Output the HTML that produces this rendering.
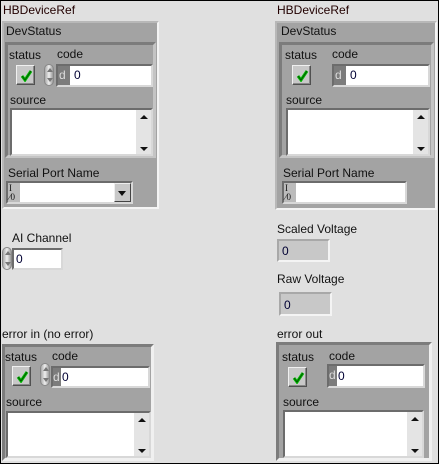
<!DOCTYPE html>
<html><head><style>
*{margin:0;padding:0;box-sizing:border-box}
body{width:439px;height:464px;background:#e0e0e0;position:relative;overflow:hidden;font-family:"Liberation Sans",sans-serif;font-size:12px;color:#111}
.frame{position:absolute;left:0;top:0;width:439px;height:464px;border:1px solid #000;pointer-events:none;z-index:10}
.a{position:absolute}
.t{position:absolute;white-space:nowrap;line-height:14px}
.cl{position:absolute;background:#a3a3a3;border:2px solid;border-color:#b8b8b8 #f4f4f4 #f4f4f4 #b8b8b8}
.in{position:absolute;background:#a3a3a3;border:3px solid;border-color:#7c7c7c #c4c4c4 #c4c4c4 #7c7c7c}
.led{position:absolute;width:19px;height:20px;background:#c8c8c8;border:1px solid;border-color:#f0f0f0 #505050 #505050 #f0f0f0;box-shadow:inset -1px -1px 0 #888}
.led svg{position:absolute;left:3px;top:3px}
.fld{position:absolute;background:#fff;border:2px solid;border-color:#6c6c6c #d8d8d8 #d8d8d8 #6c6c6c}
.dk{position:absolute;background:#7c7c7c;color:#ddd;font-size:12px;line-height:18px;padding-left:1px}
.spin{position:absolute;width:10px;background:linear-gradient(90deg,#aaa,#eee,#999);border-radius:5px;border:1px solid #888}
.spin:before{content:"";position:absolute;left:2px;top:3px;border:3px solid transparent;border-bottom:4px solid #777;border-top:0}
.spin:after{content:"";position:absolute;left:2px;bottom:3px;border:3px solid transparent;border-top:4px solid #777;border-bottom:0}
.sb{position:absolute;top:0;right:0;width:15px;bottom:0;background:#e4e4e4}
.sb:before{content:"";position:absolute;left:4px;top:5px;border:4px solid transparent;border-bottom:4px solid #111;border-top:0}
.sb:after{content:"";position:absolute;left:4px;bottom:3px;border:4px solid transparent;border-top:4px solid #111;border-bottom:0}
.num{color:#003;font-size:12px;line-height:18px}
.io{position:absolute;left:1px;top:1px;font-size:9px;line-height:9px;font-family:"Liberation Serif",serif}
.ind{position:absolute;background:#c8c8c8;border:2px solid;border-color:#a8a8a8 #f4f4f4 #f4f4f4 #a8a8a8}
</style></head><body>
<div class="frame"></div>
<svg width="0" height="0" style="position:absolute"><defs></defs></svg>

<!-- LEFT TOP -->
<div class="t" style="left:3px;top:3px;color:#200">HBDeviceRef</div>
<div class="cl" style="left:2px;top:21px;width:157px;height:188px"></div>
<div class="t" style="left:6px;top:24px">DevStatus</div>
<div class="in" style="left:5px;top:42px;width:151px;height:116px"></div>
<div class="t" style="left:9px;top:48px">status</div>
<div class="t" style="left:57px;top:47px">code</div>
<div class="led" style="left:16px;top:65px"><svg width="13" height="13"><path d="M2 7 L5 11 L11 2" stroke="#0b0" stroke-width="3" fill="none"/><path d="M2 7 L5 11 L11 2" stroke="#050" stroke-width="1" fill="none"/></svg></div>
<div class="spin" style="left:44px;top:64px;height:22px"></div>
<div class="fld" style="left:56px;top:64px;width:97px;height:23px"><div class="dk" style="left:0;top:0;width:12px;height:19px">d</div><div class="a num" style="left:16px;top:0">0</div></div>
<div class="t" style="left:10px;top:93px">source</div>
<div class="fld" style="left:10px;top:108px;width:143px;height:48px"><div class="sb"></div></div>
<div class="t" style="left:8px;top:166px">Serial Port Name</div>
<div class="fld" style="left:6px;top:181px;width:127px;height:23px;background:#fff"><div class="a" style="left:0;top:0;width:12px;height:19px;background:#bbb"><span class="io">I<br>&#8260;0</span></div><div class="a" style="right:0;top:0;width:17px;height:19px;background:#c8c8c8;border:1px solid;border-color:#eee #444 #444 #eee"><div class="a" style="left:3px;top:7px;border:4px solid transparent;border-top:5px solid #111;border-bottom:0"></div></div></div>

<!-- AI channel -->
<div class="t" style="left:12px;top:231px">AI Channel</div>
<div class="spin" style="left:2px;top:247px;height:23px"></div>
<div class="fld" style="left:12px;top:248px;width:51px;height:22px"><div class="a num" style="left:2px;top:0">0</div></div>

<!-- error in -->
<div class="t" style="left:2px;top:327px">error in (no error)</div>
<div class="in" style="left:2px;top:344px;width:152px;height:117px;border-right-color:#f0f0f0;border-bottom-color:#f0f0f0"></div>
<div class="t" style="left:5px;top:350px">status</div>
<div class="t" style="left:52px;top:349px">code</div>
<div class="led" style="left:12px;top:366px"><svg width="13" height="13"><path d="M2 7 L5 11 L11 2" stroke="#0b0" stroke-width="3" fill="none"/><path d="M2 7 L5 11 L11 2" stroke="#050" stroke-width="1" fill="none"/></svg></div>
<div class="spin" style="left:40px;top:363px;height:23px"></div>
<div class="fld" style="left:51px;top:366px;width:99px;height:22px"><div class="dk" style="left:0;top:0;width:8px;height:18px;padding:0">d</div><div class="a num" style="left:9px;top:0">0</div></div>
<div class="t" style="left:6px;top:395px">source</div>
<div class="fld" style="left:6px;top:411px;width:145px;height:47px"><div class="sb"></div></div>

<!-- RIGHT TOP -->
<div class="t" style="left:277px;top:3px;color:#200">HBDeviceRef</div>
<div class="cl" style="left:275px;top:21px;width:162px;height:189px"></div>
<div class="t" style="left:281px;top:24px">DevStatus</div>
<div class="in" style="left:279px;top:42px;width:155px;height:116px"></div>
<div class="t" style="left:285px;top:48px">status</div>
<div class="t" style="left:332px;top:47px">code</div>
<div class="led" style="left:292px;top:65px"><svg width="13" height="13"><path d="M2 7 L5 11 L11 2" stroke="#0b0" stroke-width="3" fill="none"/><path d="M2 7 L5 11 L11 2" stroke="#050" stroke-width="1" fill="none"/></svg></div>
<div class="fld" style="left:332px;top:64px;width:98px;height:23px"><div class="dk" style="left:0;top:0;width:12px;height:19px">d</div><div class="a num" style="left:16px;top:0">0</div></div>
<div class="t" style="left:286px;top:93px">source</div>
<div class="fld" style="left:286px;top:108px;width:144px;height:48px"><div class="sb"></div></div>
<div class="t" style="left:283px;top:166px">Serial Port Name</div>
<div class="fld" style="left:282px;top:181px;width:125px;height:23px"><div class="a" style="left:0;top:0;width:12px;height:19px;background:#bbb"><span class="io">I<br>&#8260;0</span></div></div>

<!-- voltages -->
<div class="t" style="left:277px;top:222px">Scaled Voltage</div>
<div class="ind" style="left:277px;top:239px;width:53px;height:23px"><div class="a num" style="left:3px;top:1px">0</div></div>
<div class="t" style="left:277px;top:272px">Raw Voltage</div>
<div class="ind" style="left:279px;top:292px;width:53px;height:24px"><div class="a num" style="left:3px;top:2px">0</div></div>

<!-- error out -->
<div class="t" style="left:277px;top:327px">error out</div>
<div class="in" style="left:276px;top:342px;width:156px;height:119px;border-right-color:#f0f0f0;border-bottom-color:#f0f0f0"></div>
<div class="t" style="left:282px;top:350px">status</div>
<div class="t" style="left:329px;top:349px">code</div>
<div class="led" style="left:288px;top:367px"><svg width="13" height="13"><path d="M2 7 L5 11 L11 2" stroke="#0b0" stroke-width="3" fill="none"/><path d="M2 7 L5 11 L11 2" stroke="#050" stroke-width="1" fill="none"/></svg></div>
<div class="fld" style="left:327px;top:364px;width:98px;height:24px"><div class="dk" style="left:0;top:0;width:8px;height:20px;padding:0">d</div><div class="a num" style="left:9px;top:1px">0</div></div>
<div class="t" style="left:283px;top:395px">source</div>
<div class="fld" style="left:283px;top:410px;width:141px;height:48px"><div class="sb"></div></div>
</body></html>
